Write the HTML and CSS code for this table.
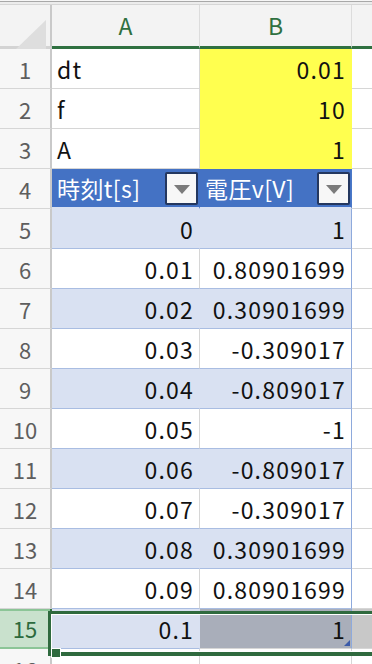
FILE: index.html
```html
<!DOCTYPE html>
<html lang="ja">
<head>
<meta charset="utf-8">
<link rel="stylesheet" href="styles.css">
</head>
<body>
<div class="sheet">
  <div class="topbar"></div>
  <div class="grid">
    <div class="corner"><div class="tri"></div></div>
    <div class="colhead sel">A</div>
    <div class="colhead sel">B</div>
    <div class="colhead sel c"></div>

    <div class="rowhead">1</div>
    <div class="cell left">dt</div>
    <div class="cell num yellow">0.01</div>
    <div class="cell"></div>

    <div class="rowhead">2</div>
    <div class="cell left">f</div>
    <div class="cell num yellow">10</div>
    <div class="cell"></div>

    <div class="rowhead">3</div>
    <div class="cell left">A</div>
    <div class="cell num yellow">1</div>
    <div class="cell"></div>

    <div class="rowhead">4</div>
    <div class="cell th">時刻t[s]<span class="dd"><span class="arrow"></span></span></div>
    <div class="cell th last">電圧v[V]<span class="dd"><span class="arrow"></span></span></div>
    <div class="cell"></div>

    <div class="rowhead">5</div>
    <div class="cell num band">0</div>
    <div class="cell num band last">1</div>
    <div class="cell"></div>

    <div class="rowhead">6</div>
    <div class="cell num tw">0.01</div>
    <div class="cell num tw last">0.80901699</div>
    <div class="cell"></div>

    <div class="rowhead">7</div>
    <div class="cell num band">0.02</div>
    <div class="cell num band last">0.30901699</div>
    <div class="cell"></div>

    <div class="rowhead">8</div>
    <div class="cell num tw">0.03</div>
    <div class="cell num tw last">-0.309017</div>
    <div class="cell"></div>

    <div class="rowhead">9</div>
    <div class="cell num band">0.04</div>
    <div class="cell num band last">-0.809017</div>
    <div class="cell"></div>

    <div class="rowhead">10</div>
    <div class="cell num tw">0.05</div>
    <div class="cell num tw last">-1</div>
    <div class="cell"></div>

    <div class="rowhead">11</div>
    <div class="cell num band">0.06</div>
    <div class="cell num band last">-0.809017</div>
    <div class="cell"></div>

    <div class="rowhead">12</div>
    <div class="cell num tw">0.07</div>
    <div class="cell num tw last">-0.309017</div>
    <div class="cell"></div>

    <div class="rowhead">13</div>
    <div class="cell num band">0.08</div>
    <div class="cell num band last">0.30901699</div>
    <div class="cell"></div>

    <div class="rowhead">14</div>
    <div class="cell num tw">0.09</div>
    <div class="cell num tw last">0.80901699</div>
    <div class="cell"></div>

    <div class="rowhead selrow">15</div>
    <div class="cell num band active">0.1</div>
    <div class="cell num shaded last">1<span class="resize"></span></div>
    <div class="cell shaded-c"></div>

    <div class="rowhead">16</div>
    <div class="cell"></div>
    <div class="cell"></div>
    <div class="cell"></div>

    <div class="selection"><span class="handle"></span></div>
  </div>
</div>
</body>
</html>
```

FILE: styles.css
```css
html, body {
  margin: 0;
  padding: 0;
  background: #ffffff;
}
body {
  font-family: "Noto Sans CJK JP", "Noto Sans", sans-serif;
  color: #111;
  overflow: hidden;
}
.sheet {
  width: 372px;
  height: 664px;
  overflow: hidden;
}
.topbar {
  height: 5px;
  box-sizing: border-box;
  background: #ececec;
  border-top: 1px solid #f6f6f6;
  border-bottom: 1px solid #d6d6d6;
  box-shadow: inset 0 1px 0 #a8a8a8;
}
.grid {
  position: relative;
  display: grid;
  grid-template-columns: 52px 148px 152px 40px;
  grid-auto-rows: 40px;
  grid-template-rows: 44px;
}
.corner {
  position: relative;
  background: #f3f3f3;
  border-right: 2px solid #c9c9c9;
  border-bottom: 3px solid #d3d3d3;
  box-sizing: border-box;
}
.tri {
  position: absolute;
  left: 16px;
  top: 15px;
  width: 30px;
  height: 29px;
  background: #dedede;
  clip-path: polygon(100% 0, 100% 100%, 0 100%);
}
.colhead {
  background: #f3f3f3;
  border-right: 1px solid #dcdcdc;
  border-bottom: 3px solid #2f7040;
  box-sizing: border-box;
  display: flex;
  align-items: center;
  justify-content: center;
  font-size: 23px;
  color: #2f7040;
  padding-bottom: 1px;
}
.colhead.c {
  border-right: none;
}
.rowhead {
  background: #f7f7f7;
  border-right: 2px solid #c9c9c9;
  border-bottom: 1px solid #d6d6d6;
  box-sizing: border-box;
  display: flex;
  align-items: center;
  justify-content: center;
  font-size: 22px;
  color: #5e5e5e;
}
.rowhead.selrow {
  background: #c9e1cd;
  color: #2d6a3d;
  border-right-color: #2f7040;
  border-bottom: 2px solid #8cc597;
  box-shadow: inset 0 2px 0 #8cc597;
}
.cell {
  position: relative;
  border-right: 1px solid #d6d6d6;
  border-bottom: 1px solid #d6d6d6;
  box-sizing: border-box;
  display: flex;
  align-items: center;
  font-size: 23px;
  white-space: nowrap;
  letter-spacing: 1.2px;
}
.cell.left {
  padding-left: 5px;
}
.cell.num {
  justify-content: flex-end;
  padding-right: 5px;
}
.cell.yellow {
  background: #ffff4f;
  border-right-color: #ffff4f;
  border-bottom-color: #ffff4f;
}
.cell.th {
  background: #4472c4;
  color: #ffffff;
  padding-left: 5px;
  border-right-color: #4472c4;
  border-bottom: 2px solid #d9e1f2;
  justify-content: space-between;
  padding-right: 1px;
  letter-spacing: 0.4px;
}
.cell.th.last {
  border-right: 1px solid #4a78c8;
  padding-right: 1px;
}
.dd {
  width: 33px;
  height: 33px;
  box-sizing: border-box;
  background: #f7f7f7;
  border: 2px solid #24375f;
  border-radius: 2px;
  display: flex;
  align-items: center;
  justify-content: center;
}
.arrow {
  width: 0;
  height: 0;
  border-left: 8px solid transparent;
  border-right: 8px solid transparent;
  border-top: 9px solid #7b7b7b;
  margin-top: 2px;
}
.cell.band {
  background: #d9e1f2;
  border-right-color: #d9e1f2;
  border-bottom-color: #a9bde2;
}
.cell.tw {
  background: #ffffff;
  border-bottom-color: #a9bde2;
}
.cell.last {
  border-right: 1px solid #8eaadc;
}
.cell.active {
  background: #dae1f1;
}
.cell.shaded {
  background: #a9aeba;
}
.cell.shaded-c {
  background: #c8c8c8;
}
.resize {
  position: absolute;
  right: 1px;
  bottom: 2px;
  width: 0;
  height: 0;
  border-left: 6px solid transparent;
  border-bottom: 6px solid #3b5aa8;
}
.selection {
  position: absolute;
  left: 48px;
  top: 606px;
  width: 340px;
  height: 45px;
  box-sizing: border-box;
  border: 3px solid #2f6a3e;
  border-bottom-width: 4px;
  box-shadow: inset 0 0 0 1px #ffffff;
  pointer-events: none;
}
.handle {
  position: absolute;
  left: 0px;
  bottom: -6px;
  width: 10px;
  height: 10px;
  background: #2f6a3e;
  border: 1px solid #ffffff;
  box-sizing: border-box;
}
```
